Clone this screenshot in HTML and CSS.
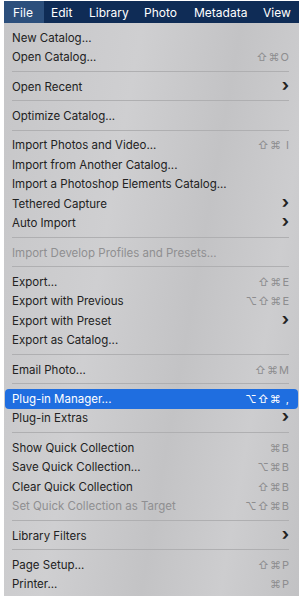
FILE: index.html
```html
<!DOCTYPE html>
<html>
  <head>
    <title>File menu</title>
    <link rel="stylesheet" href="styles.css">
  </head>
  <body>
    <div class="screen">
      <ul class="menubar">
        <li class="active">File</li>
        <li>Edit</li>
        <li>Library</li>
        <li>Photo</li>
        <li>Metadata</li>
        <li>View</li>
      </ul>

      <div class="menu">
        <div class="item"><span>New Catalog...</span></div>
        <div class="item"><span>Open Catalog...</span><span class="key">⇧⌘O</span></div>
        <div class="sep"></div>
        <div class="item"><span>Open Recent</span><span class="more">›</span></div>
        <div class="sep"></div>
        <div class="item"><span>Optimize Catalog...</span></div>
        <div class="sep"></div>
        <div class="item"><span>Import Photos and Video...</span><span class="key">⇧⌘ I</span></div>
        <div class="item"><span>Import from Another Catalog...</span></div>
        <div class="item"><span>Import a Photoshop Elements Catalog...</span></div>
        <div class="item"><span>Tethered Capture</span><span class="more">›</span></div>
        <div class="item"><span>Auto Import</span><span class="more">›</span></div>
        <div class="sep"></div>
        <div class="item off"><span>Import Develop Profiles and Presets...</span></div>
        <div class="sep"></div>
        <div class="item"><span>Export...</span><span class="key">⇧⌘E</span></div>
        <div class="item"><span>Export with Previous</span><span class="key">⌥⇧⌘E</span></div>
        <div class="item"><span>Export with Preset</span><span class="more">›</span></div>
        <div class="item"><span>Export as Catalog...</span></div>
        <div class="sep"></div>
        <div class="item"><span>Email Photo...</span><span class="key">⇧⌘M</span></div>
        <div class="sep"></div>
        <div class="item selected"><span>Plug-in Manager...</span><span class="key">⌥⇧⌘ ,</span></div>
        <div class="item"><span>Plug-in Extras</span><span class="more">›</span></div>
        <div class="sep"></div>
        <div class="item"><span>Show Quick Collection</span><span class="key">⌘B</span></div>
        <div class="item"><span>Save Quick Collection...</span><span class="key">⌥⌘B</span></div>
        <div class="item"><span>Clear Quick Collection</span><span class="key">⇧⌘B</span></div>
        <div class="item off"><span>Set Quick Collection as Target</span><span class="key">⌥⇧⌘B</span></div>
        <div class="sep"></div>
        <div class="item"><span>Library Filters</span><span class="more">›</span></div>
        <div class="sep"></div>
        <div class="item"><span>Page Setup...</span><span class="key">⇧⌘P</span></div>
        <div class="item"><span>Printer...</span><span class="key">⌘P</span></div>
      </div>
    </div>
  </body>
</html>
```

FILE: styles.css
```css
* {
  margin: 0px;
  padding: 0px;
  box-sizing: border-box;
}
body {
  background: white;
  font-family: "Inter", "DejaVu Sans", sans-serif;
}
.screen {
  width: 295px;
  margin: 1px 0 0 4px;
}

.menubar {
  list-style-type: none;
  display: flex;
  height: 22px;
  background: #0f2c56;
  color: white;
  font-size: 12px;
  align-items: stretch;
}
.menubar li {
  display: flex;
  align-items: center;
  padding: 0 6px;
}
.menubar li:nth-child(1) {
  width: 40px;
  padding-left: 9px;
}
.menubar li:nth-child(2) {
  width: 39px;
  padding-left: 7px;
}
.menubar li:nth-child(3) {
  width: 55px;
  padding-left: 6px;
}
.menubar li:nth-child(4) {
  width: 50px;
  padding-left: 6px;
}
.menubar li:nth-child(5) {
  width: 69px;
  padding-left: 6px;
}
.menubar li.active {
  background: #2c4f7c;
}

.menu {
  background: linear-gradient(100deg, #c6c6c8 0%, #cfcfd1 35%, #c3c3c5 60%, #cdcdcf 80%, #c2c2c4 100%);
  padding: 5px 1px 3px 1px;
  height: 573px;
}
.item {
  display: flex;
  justify-content: space-between;
  align-items: center;
  height: 19.6px;
  padding: 0 8px 0 7px;
  font-size: 11.5px;
  color: #222;
  border-radius: 4px;
}
.item.off {
  color: #8f8f91;
}
.item.selected {
  background: #1f6ee0;
  color: white;
}
.key {
  color: #8d8d8f;
  font-size: 11px;
  letter-spacing: 1px;
}
.selected .key {
  color: white;
}
.more {
  font-size: 17px;
  font-weight: bold;
  color: #222;
  line-height: 1;
  margin-top: -3px;
  margin-right: 1px;
}
.sep {
  height: 9.6px;
  margin: 0 9px 0 7px;
  padding-top: 4px;
}
.sep::after {
  content: "";
  display: block;
  height: 1px;
  background: #afafb1;
}
```
